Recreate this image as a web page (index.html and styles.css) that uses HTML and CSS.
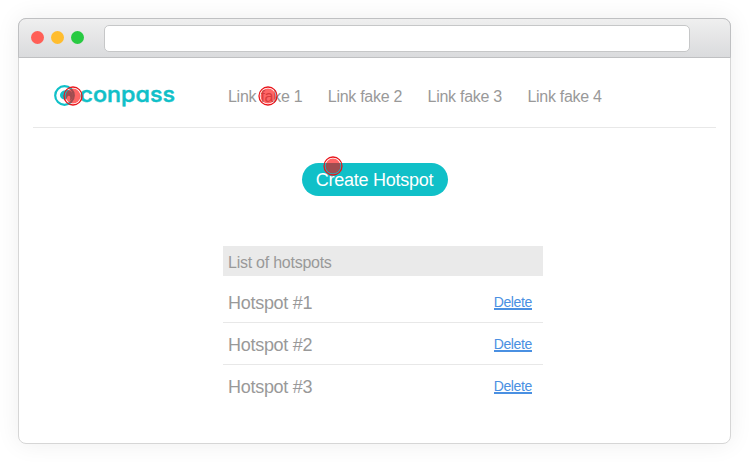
FILE: index.html
```html
<!DOCTYPE html>
<html lang="en">
<head>
<meta charset="utf-8">
<title>Conpass</title>
<link rel="stylesheet" href="styles.css">
</head>
<body>
<div class="window">
  <header class="toolbar">
    <i class="light red"></i><i class="light yellow"></i><i class="light green"></i>
    <div class="address"></div>
  </header>
  <main class="page">
    <div class="topbar">
      <div class="logo">
        <svg class="brand" width="128" height="32" viewBox="0 0 128 32">
          <circle cx="13.500" cy="15.500" r="9.300" fill="none" stroke="#10c0c8" stroke-width="2.200"/>
          <path fill="#10c0c8" d="M9 15.500c0-3.300 3.200-5.500 7-5.500 3.500 0 6 2.700 6 5.800 0 2.400-1.300 4.300-3.200 5.200.6-2 .8-5-.8-5.300-2-.4-1.600 3.800-4.200 3.800-2.700 0-4.800-1.700-4.800-4z"/>
          <text class="wordmark" x="28.500" y="22" textLength="95.500" lengthAdjust="spacingAndGlyphs">conpass</text>
        </svg>
        <svg class="marker" viewBox="0 0 20 20"><circle class="ring" cx="10" cy="10" r="9"/><circle class="dot" cx="10" cy="10" r="7.500"/></svg>
      </div>
      <nav class="nav">
        <a class="link">Link fake 1<svg class="marker" viewBox="0 0 20 20"><circle class="ring" cx="10" cy="10" r="9"/><circle class="dot" cx="10" cy="10" r="7.500"/></svg></a>
        <a class="link">Link fake 2</a>
        <a class="link">Link fake 3</a>
        <a class="link">Link fake 4</a>
      </nav>
    </div>
    <button class="create"><span class="label">Create Hotspot</span><svg class="marker" viewBox="0 0 20 20"><circle class="ring" cx="10" cy="10" r="9"/><circle class="dot" cx="10" cy="10" r="7.500"/></svg></button>
    <section class="list">
      <h2 class="heading"><span>List of hotspots</span></h2>
      <div class="row"><span class="name">Hotspot #1</span><a class="delete">Delete</a></div>
      <div class="row"><span class="name">Hotspot #2</span><a class="delete">Delete</a></div>
      <div class="row"><span class="name">Hotspot #3</span><a class="delete">Delete</a></div>
    </section>
  </main>
</div>
</body>
</html>
```

FILE: styles.css
```css
* { box-sizing: border-box; }
body {
  margin: 0;
  padding: 18px;
  height: 462px;
  overflow: hidden;
  background: #fff;
  font-family: "Liberation Sans", Arial, sans-serif;
  color: #999;
}
.window {
  width: 713px;
  height: 426px;
  border: 1px solid #d6d6d6;
  border-radius: 8px;
  background: #fff;
  box-shadow: 0 0 24px rgba(0, 0, 0, .07);
}
.toolbar {
  display: flex;
  align-items: center;
  gap: 7px;
  width: 713px;
  height: 40px;
  margin: -1px 0 0 -1px;
  padding-left: 12px;
  border: 1px solid #bfc0c2;
  border-radius: 8px 8px 0 0;
  background: linear-gradient(#efefef, #dadbdd);
}
.light { width: 13px; height: 13px; margin-bottom: 1px; border-radius: 50%; }
.red { background: #ff5f57; }
.yellow { background: #ffbd2e; }
.green { background: #28ca42; }
.address {
  width: 586px;
  height: 27px;
  margin-left: 13px;
  border: 1px solid #c6c7c8;
  border-radius: 5px;
  background: #fff;
}
.page { display: flex; flex-direction: column; padding: 0 14px; }
.topbar {
  display: flex;
  align-items: flex-start;
  height: 70px;
  padding: 22px 0 0 18px;
  border-bottom: 1px solid #e8e8e8;
}
.logo { position: relative; width: 177px; }
.brand { display: block; }
.wordmark {
  font: 500 22px Inter, "Open Sans", sans-serif;
  font-feature-settings: "cv11";
  fill: #10c0c8;
  stroke: #10c0c8;
  stroke-width: .5px;
  stroke-linejoin: round;
}
.nav { display: flex; padding-top: 8px; }
.link {
  position: relative;
  width: 99.8px;
  font-size: 16px;
  line-height: 18px;
  letter-spacing: -.28px;
  white-space: nowrap;
}
.marker {
  position: absolute;
  width: 20px;
  height: 20px;
}
.ring { fill: none; stroke: #e9151b; stroke-width: 1.3px; }
.dot { fill: #f00; fill-opacity: .6; }
.logo .marker { left: 12px; top: 6px; }
.link .marker { left: 30px; top: -2px; }
.create {
  position: relative;
  align-self: center;
  width: 146px;
  height: 33px;
  margin-top: 35px;
  padding: 1px 0 0;
  border: 0;
  border-radius: 17px;
  background: #10c0c8;
  color: #fff;
  font: 18px "Liberation Sans", Arial, sans-serif;
  letter-spacing: -.27px;
}
.create .marker { left: 21px; top: -7px; }
.list { width: 320px; margin: 50px 0 0 190px; }
.heading {
  height: 30px;
  margin: 0 0 5px;
  padding: 8px 5px 0;
  background: #eaeaea;
  font-size: 16px;
  font-weight: 400;
  line-height: 18px;
  letter-spacing: -.25px;
}
.row {
  display: flex;
  justify-content: space-between;
  align-items: center;
  height: 42px;
  padding: 3px 11px 0 5px;
  border-bottom: 1px solid #e8e8e8;
}
.row:last-child { border-bottom-color: transparent; }
.name { padding-top: 1px; font-size: 18px; letter-spacing: -.28px; }
.delete {
  height: 14px;
  margin-top: -1px;
  border-bottom: 2px solid #4a90e2;
  color: #4a90e2;
  font-size: 14px;
  line-height: 13px;
  letter-spacing: -.35px;
}
```
